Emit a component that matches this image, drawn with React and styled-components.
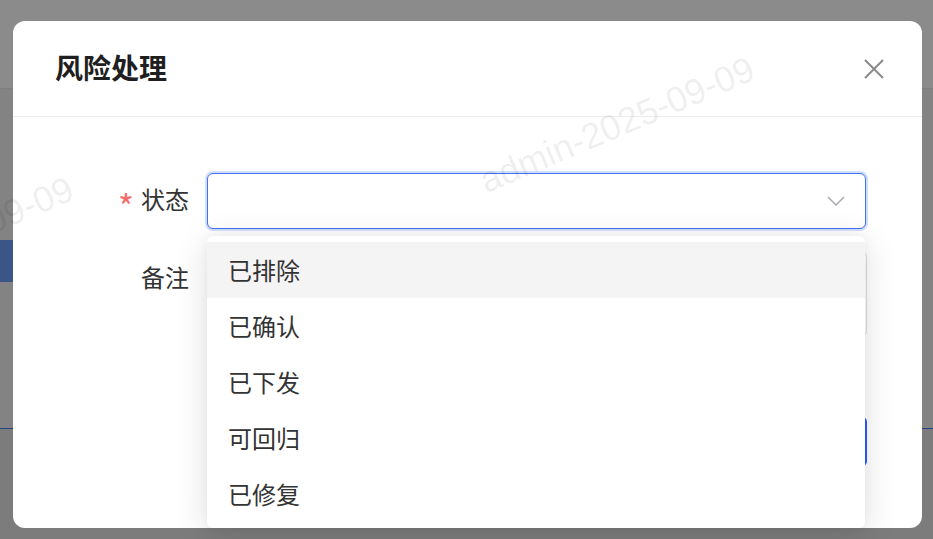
import React from "react";
import styled, { createGlobalStyle } from "styled-components";

const GlobalStyle = createGlobalStyle`
  html, body {
    margin: 0;
    padding: 0;
    overflow: hidden;
  }
  body {
    font-family: "Noto Sans CJK SC", "Noto Sans", sans-serif;
    color: #333;
  }
  * {
    box-sizing: border-box;
  }
`;

// page behind the dialog, already dimmed by the mask
const Page = styled.div`
  position: fixed;
  inset: 0;
  display: flex;
  flex-direction: column;
  background: #838383;
`;

const PageHeader = styled.div`
  height: 89px;
  flex-shrink: 0;
  background: #8b8b8b;
  border-bottom: 1px solid #7e7e7e;
`;

const PageBody = styled.div`
  flex: 1;
  display: flex;
  flex-direction: column;
  padding-top: 151px;
`;

const SideTab = styled.div`
  width: 220px;
  height: 42px;
  background: #3a5586;
`;

const TableArea = styled.div`
  flex: 1;
  margin-top: 146px;
  border-top: 1px solid #25438a;
  background: #7c7c7c;
`;

const Mask = styled.div`
  position: fixed;
  inset: 0;
  padding: 21px 0 0 13px;
`;

const Modal = styled.div`
  width: 909px;
  height: 507px;
  background: #fff;
  border-radius: 12px;
  display: flex;
  flex-direction: column;
`;

const Header = styled.div`
  height: 96px;
  flex-shrink: 0;
  display: flex;
  align-items: center;
  justify-content: space-between;
  padding: 0 38px 0 42px;
  border-bottom: 1px solid #ececec;
`;

const Title = styled.h2`
  margin: 0 0 3px;
  font-size: 28px;
  font-weight: 700;
  color: #1f1f1f;
`;

const CloseButton = styled.button`
  border: 0;
  padding: 0;
  background: none;
  width: 20px;
  height: 20px;
  display: flex;
  cursor: pointer;
`;

const Body = styled.div`
  flex: 1;
  padding: 56px 56px 0 42px;
  display: flex;
  flex-direction: column;
`;

const FormRow = styled.div`
  display: grid;
  grid-template-columns: 152px 1fr;
  align-items: start;
  margin-bottom: 22px;
`;

const Label = styled.label`
  height: 56px;
  display: flex;
  align-items: center;
  justify-content: flex-end;
  gap: 7px;
  padding: 0 18px 4px 0;
  font-size: 24px;
  line-height: 1;
  color: #333;
  white-space: nowrap;
`;

const Star = styled.span`
  color: #f56c6c;
  font-size: 34px;
  line-height: 1;
  padding-top: 13px;
`;

const SelectBox = styled.div`
  position: relative;
  height: 56px;
  border: 1px solid #3f72f5;
  border-radius: 6px;
  box-shadow: 0 0 0 2px #d3defd;
  display: flex;
  align-items: center;
  justify-content: flex-end;
  padding-right: 20px;
  background: #fff;
`;

const Dropdown = styled.ul`
  position: absolute;
  top: calc(100% + 8px);
  left: -1px;
  right: 0;
  margin: 0;
  padding: 6px 0;
  list-style: none;
  background: #fff;
  border-radius: 6px;
  box-shadow: 0 6px 34px rgba(0, 0, 0, 0.13), 0 0 10px rgba(0, 0, 0, 0.04);
  z-index: 5;
`;

const Option = styled.li`
  height: 56px;
  line-height: 56px;
  padding: 0 22px 0 21px;
  font-size: 24px;
  color: #333;
  background: ${(p) => (p.$active ? "#f4f4f4" : "#fff")};
`;

const TextArea = styled.div`
  height: 86px;
  border: 1px solid #dcdfe6;
  border-radius: 6px;
  margin-right: -1px;
`;

const Footer = styled.div`
  display: flex;
  justify-content: flex-end;
  gap: 16px;
  margin-top: 57px;
  margin-right: -1px;
`;

const Button = styled.button`
  height: 51px;
  padding: 0 30px;
  border-radius: 6px;
  font-family: inherit;
  font-size: 22px;
  border: 1px solid ${(p) => (p.$primary ? "#2b5cff" : "#dcdfe6")};
  background: ${(p) => (p.$primary ? "#2b5cff" : "#fff")};
  color: ${(p) => (p.$primary ? "#fff" : "#333")};
`;

const Watermark = styled.span`
  position: absolute;
  left: ${(p) => p.$x}px;
  top: ${(p) => p.$y}px;
  width: 294px;
  font-family: "Liberation Sans", Arial, sans-serif;
  font-size: 36px;
  line-height: 36px;
  white-space: nowrap;
  color: rgba(0, 0, 0, 0.08);
  transform: rotate(-23deg);
  pointer-events: none;
  z-index: 1;
`;

const options = ["已排除", "已确认", "已下发", "可回归", "已修复"];

const Chevron = () => (
  <svg width="18" height="10" viewBox="0 0 18 10" fill="none">
    <path d="M1 1 L9 9 L17 1" stroke="#a8abb2" strokeWidth="1.5" />
  </svg>
);

const CloseIcon = () => (
  <svg width="20" height="20" viewBox="0 0 20 20" fill="none">
    <path d="M1 1 L19 19 M19 1 L1 19" stroke="#8a8a8a" strokeWidth="2" />
  </svg>
);

export default function App() {
  return (
    <>
      <GlobalStyle />
      <Page>
        <PageHeader />
        <PageBody>
          <SideTab />
          <TableArea />
        </PageBody>
      </Page>
      <Mask>
        <Modal>
          <Header>
            <Title>风险处理</Title>
            <CloseButton aria-label="close">
              <CloseIcon />
            </CloseButton>
          </Header>
          <Body>
            <FormRow>
              <Label>
                <Star>*</Star>
                状态
              </Label>
              <SelectBox>
                <Chevron />
                <Dropdown>
                  {options.map((o, i) => (
                    <Option key={o} $active={i === 0}>
                      {o}
                    </Option>
                  ))}
                </Dropdown>
              </SelectBox>
            </FormRow>
            <FormRow>
              <Label>备注</Label>
              <TextArea />
            </FormRow>
            <Footer>
              <Button>取消</Button>
              <Button $primary>确定</Button>
            </Footer>
          </Body>
        </Modal>
        <Watermark $x={470} $y={107}>admin-2025-09-09</Watermark>
        <Watermark $x={-211} $y={227}>admin-2025-09-09</Watermark>
      </Mask>
    </>
  );
}
